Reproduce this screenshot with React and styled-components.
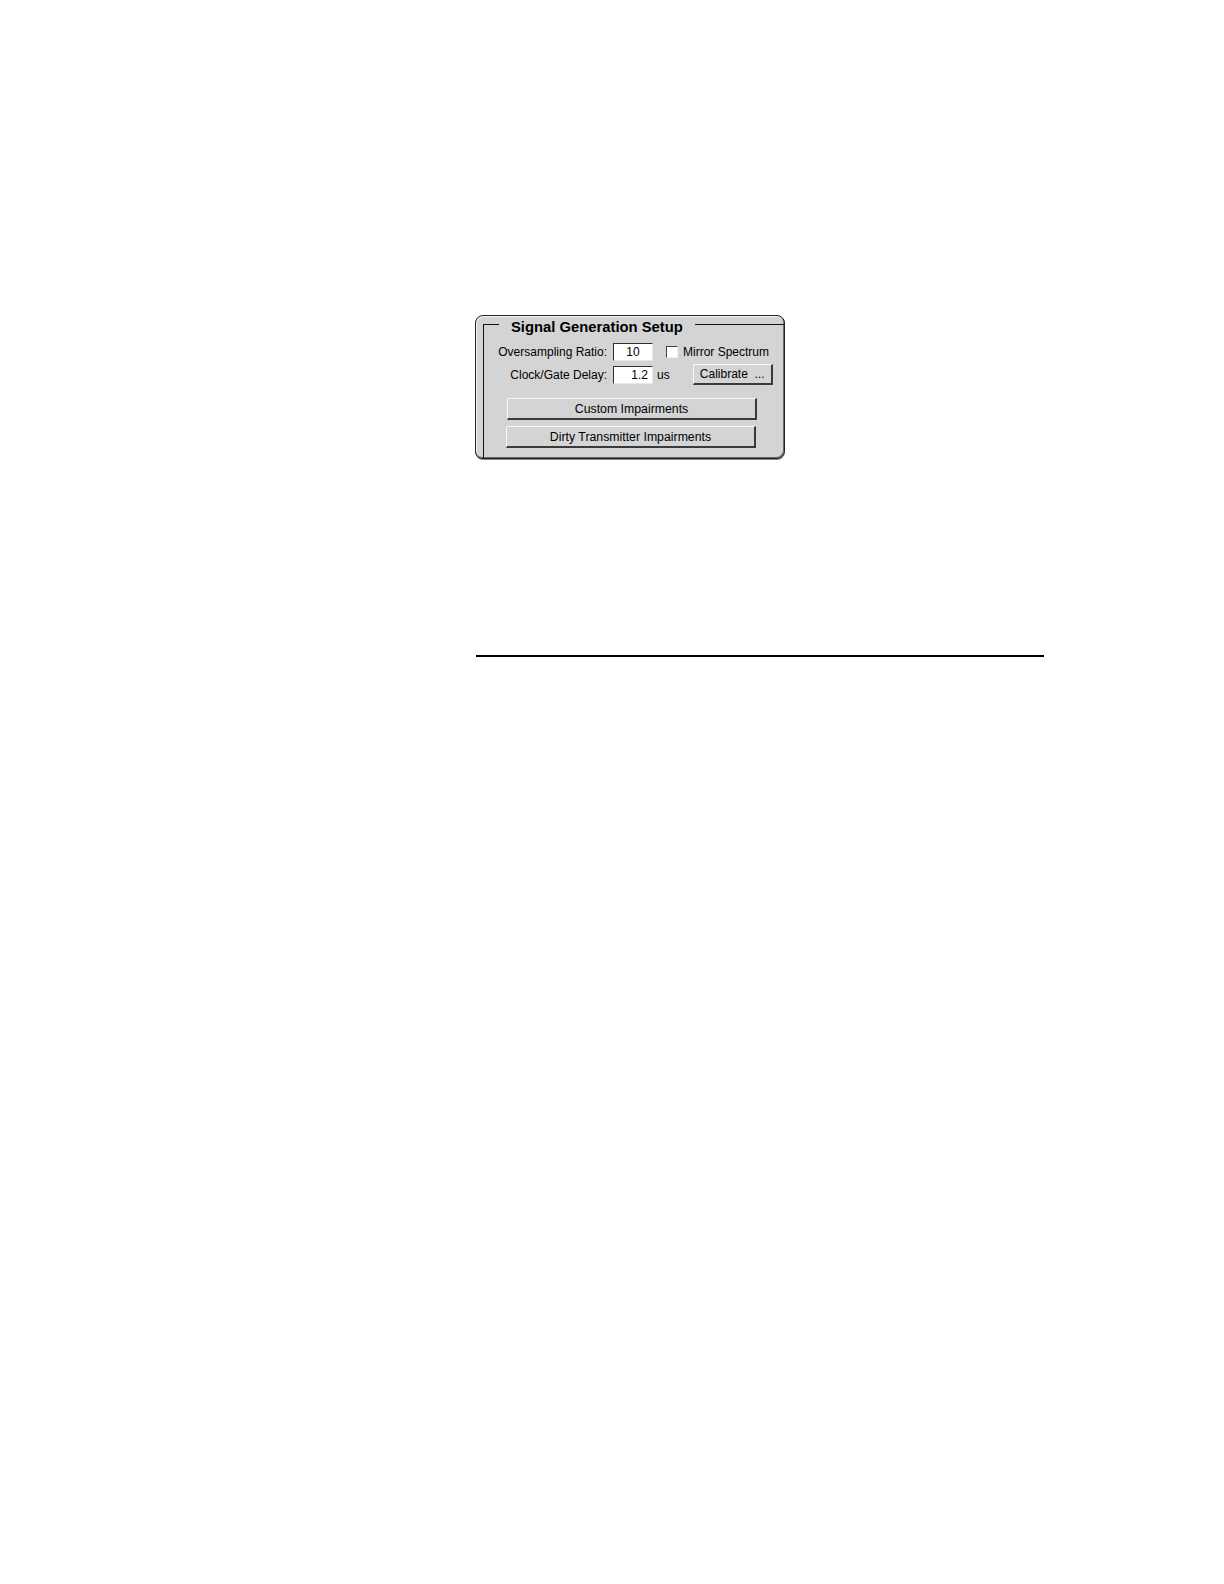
import React from 'react';
import styled, { createGlobalStyle } from 'styled-components';

const GlobalStyle = createGlobalStyle`
	html, body {
		margin: 0;
		padding: 0;
		background: #ffffff;
	}
	body {
		font-family: 'Liberation Sans', Arial, sans-serif;
		color: #000;
	}
`;

const Page = styled.div`
	width: 1224px;
	min-height: 1584px;
	padding: 315px 0 0 475px;
	box-sizing: border-box;
`;

const Panel = styled.div`
	width: 310px;
	height: 144px;
	box-sizing: border-box;
	background: #d4d4d4;
	border: 1px solid #222;
	border-radius: 8px;
	box-shadow: inset 1px 1px 0 #f4f4f4, inset -1px -1px 0 #6a6a6a,
		0 1px 0 #888;
	overflow: hidden;
	padding: 0 0 0 7px;
`;

const Group = styled.fieldset`
	margin: 0;
	padding: 7px 0 0 0;
	border: none;
	border-top: 1px solid #111;
	border-left: 1px solid #111;
	height: 160px;
	box-sizing: border-box;
	min-width: 0;
`;

const Title = styled.legend`
	margin-left: 15px;
	padding: 5px 12px 0;
	font-size: 14.8px;
	font-weight: bold;
	line-height: 12px;
`;

const Row = styled.div`
	display: flex;
	align-items: center;
	height: 23px;
`;

const Label = styled.span`
	width: 123px;
	text-align: right;
	font-size: 12px;
	padding-right: 6px;
	box-sizing: content-box;
`;

const Field = styled.div`
	width: 40px;
	height: 18px;
	box-sizing: border-box;
	background: #fff;
	border-top: 1px solid #303030;
	border-left: 1px solid #303030;
	border-right: 1px solid #e8e8e8;
	border-bottom: 1px solid #e8e8e8;
	font-size: 12px;
	line-height: 16px;
	text-align: ${(p) => p.align || 'center'};
	padding: 0 4px;
`;

const Check = styled.span`
	display: inline-block;
	width: 12px;
	height: 12px;
	box-sizing: border-box;
	background: #fff;
	border-top: 1px solid #404040;
	border-left: 1px solid #404040;
	border-right: 1px solid #f0f0f0;
	border-bottom: 1px solid #f0f0f0;
	margin: 0 5px 0 13px;
`;

const Text = styled.span`
	font-size: 12px;
	margin-left: ${(p) => p.gap || 0}px;
`;

const Button = styled.div`
	width: ${(p) => p.w}px;
	height: ${(p) => p.h || 22}px;
	margin-left: ${(p) => p.ml || 0}px;
	box-sizing: border-box;
	background: #d4d4d4;
	border-top: 1px solid #f6f6f6;
	border-left: 1px solid #f6f6f6;
	border-right: 2px solid #3a3a3a;
	border-bottom: 2px solid #3a3a3a;
	font-size: ${(p) => p.fs || 12}px;
	white-space: nowrap;
	display: flex;
	align-items: center;
	justify-content: center;
`;

const Buttons = styled.div`
	display: flex;
	flex-direction: column;
	gap: 6px;
	margin-top: 12px;
	padding-left: 22px;
`;

const Rule = styled.div`
	width: 568px;
	height: 2px;
	background: #000;
	margin-top: 196px;
	margin-left: 1px;
`;

export default function App() {
	return (
		<>
			<GlobalStyle />
			<Page>
				<Panel>
					<Group>
						<Title>Signal Generation Setup</Title>
						<Row>
							<Label>Oversampling Ratio:</Label>
							<Field>10</Field>
							<Check />
							<Text>Mirror Spectrum</Text>
						</Row>
						<Row>
							<Label>Clock/Gate Delay:</Label>
							<Field align='right'>1.2</Field>
							<Text gap={4}>us</Text>
							<Button w={80} h={21} ml={23}>
								Calibrate &nbsp;...
							</Button>
						</Row>
						<Buttons>
							<Button w={250} ml={1} fs={12.3}>
								Custom Impairments
							</Button>
							<Button w={250} fs={12.3}>
								Dirty Transmitter Impairments
							</Button>
						</Buttons>
					</Group>
				</Panel>
				<Rule />
			</Page>
		</>
	);
}
